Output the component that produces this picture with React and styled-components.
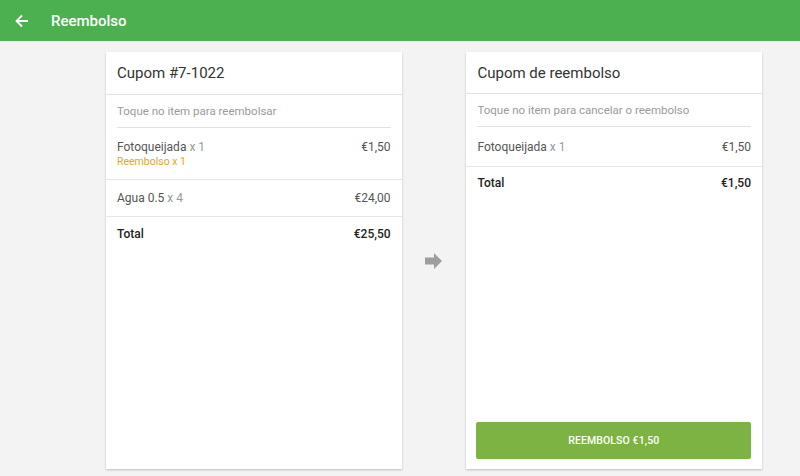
import React from "react";
import styled, { createGlobalStyle } from "styled-components";

const Global = createGlobalStyle`
  html, body, #root {
    margin: 0;
    height: 100%;
  }
  body {
    font-family: Roboto, "Liberation Sans", sans-serif;
    background: #f3f3f3;
  }
`;

const Page = styled.div`
  height: 100vh;
  display: flex;
  flex-direction: column;
`;

const AppBar = styled.header`
  height: 41px;
  background: #4caf50;
  display: flex;
  align-items: center;
  padding-left: 15px;
  gap: 22px;
  color: #fff;
  flex-shrink: 0;
`;

const BarTitle = styled.h1`
  margin: 0;
  font-size: 15px;
  font-weight: 500;
`;

const BackButton = styled.button`
  background: none;
  border: none;
  padding: 0;
  display: flex;
  color: #fff;
  cursor: pointer;
`;

const Content = styled.main`
  flex: 1;
  display: flex;
  align-items: center;
  padding: 11px 38px 7px 106px;
  min-height: 0;
`;

const Card = styled.section`
  width: 296px;
  align-self: stretch;
  background: #fff;
  box-shadow: 0 1px 2px rgba(0, 0, 0, 0.22);
  display: flex;
  flex-direction: column;
`;

const CardTitle = styled.div`
  padding: ${(p) => p.$pad || "12px 11px"};
  font-size: 15px;
  line-height: 18px;
  color: #333;
  border-bottom: 1px solid #e2e2e2;
`;

const Hint = styled.div`
  margin: 0 11px;
  padding: 8px 0;
  font-size: 11.5px;
  line-height: 16px;
  color: #9a9a9a;
  border-bottom: 1px solid #e2e2e2;
`;

const Row = styled.div`
  display: flex;
  justify-content: space-between;
  align-items: flex-start;
  padding: ${(p) => p.$pad || "11px 11px"};
  font-size: 12px;
  line-height: 16px;
  color: ${(p) => (p.$bold ? "#222" : "#555")};
  font-weight: ${(p) => (p.$bold ? 500 : 400)};
  border-bottom: ${(p) => (p.$last ? "none" : "1px solid #e6e6e6")};
`;

const ItemName = styled.div`
  display: flex;
  flex-direction: column;
`;

const Qty = styled.span`
  color: #999;
`;

const Refund = styled.span`
  font-size: 10.5px;
  line-height: 14px;
  color: #e9a420;
`;

const Spacer = styled.div`
  flex: 1;
`;

const ArrowBox = styled.div`
  width: 64px;
  display: flex;
  justify-content: center;
  padding-right: 1px;
  color: #9e9e9e;
`;

const RefundButton = styled.button`
  margin: 0 11px 10px 10px;
  height: 37px;
  border: none;
  border-radius: 2px;
  background: #7cb342;
  color: #fff;
  font-family: inherit;
  font-size: 10.5px;
  font-weight: 500;
  letter-spacing: 0.1px;
  cursor: pointer;
`;

const Arrow = () => (
  <svg width="17" height="16" viewBox="0 0 17 16">
    <path d="M0 4.5h9V0l8 8-8 8v-4.5H0z" fill="currentColor" />
  </svg>
);

export default function App() {
  return (
    <Page>
      <Global />
      <AppBar>
        <BackButton aria-label="Voltar">
          <svg width="14" height="14" viewBox="0 0 14 14">
            <path d="M13 7H2M7 1.5L1.5 7 7 12.5" stroke="#fff" strokeWidth="1.8" fill="none" />
          </svg>
        </BackButton>
        <BarTitle>Reembolso</BarTitle>
      </AppBar>
      <Content>
        <Card>
          <CardTitle>Cupom #7-1022</CardTitle>
          <Hint>Toque no item para reembolsar</Hint>
          <Row $pad="11px 11px 10px">
            <ItemName>
              <span>
                Fotoqueijada <Qty>x 1</Qty>
              </span>
              <Refund>Reembolso x 1</Refund>
            </ItemName>
            <span>€1,50</span>
          </Row>
          <Row $pad="10px 11px">
            <span>
              Agua 0.5 <Qty>x 4</Qty>
            </span>
            <span>€24,00</span>
          </Row>
          <Row $bold $last $pad="9px 11px">
            <span>Total</span>
            <span>€25,50</span>
          </Row>
        </Card>
        <ArrowBox>
          <Arrow />
        </ArrowBox>
        <Card>
          <CardTitle $pad="11.5px 11px">Cupom de reembolso</CardTitle>
          <Hint>Toque no item para cancelar o reembolso</Hint>
          <Row $pad="12px 11px 11px">
            <span>
              Fotoqueijada <Qty>x 1</Qty>
            </span>
            <span>€1,50</span>
          </Row>
          <Row $bold $last $pad="8px 11px">
            <span>Total</span>
            <span>€1,50</span>
          </Row>
          <Spacer />
          <RefundButton>REEMBOLSO €1,50</RefundButton>
        </Card>
      </Content>
    </Page>
  );
}
